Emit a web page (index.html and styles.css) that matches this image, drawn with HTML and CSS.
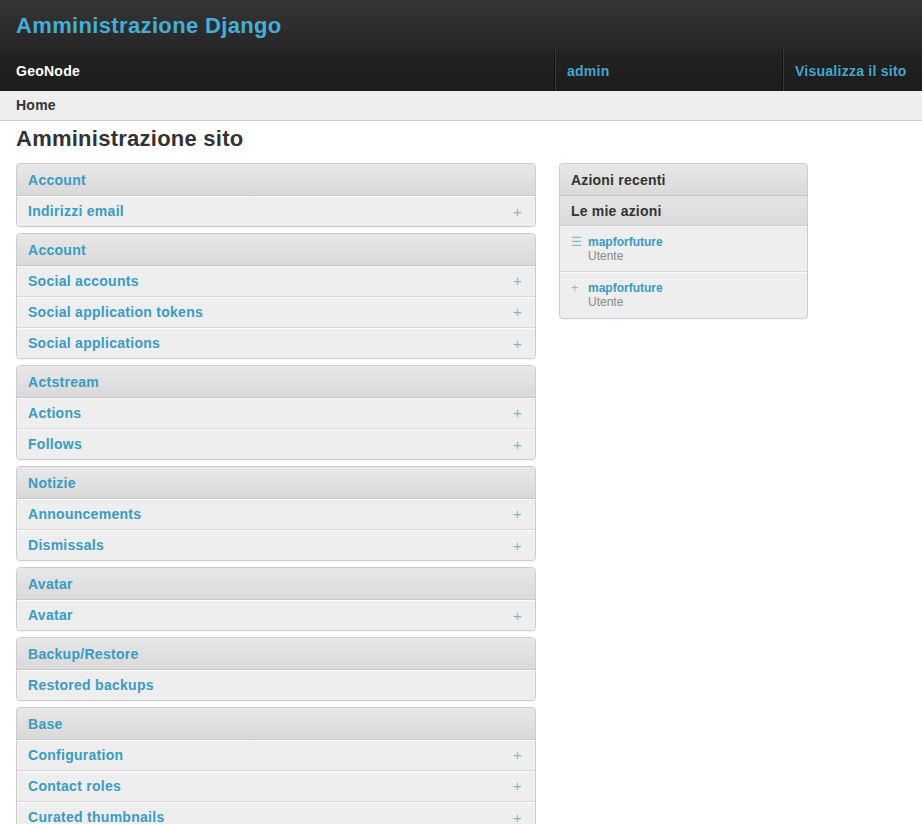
FILE: index.html
```html
<!DOCTYPE html>
<html lang="it">
<head>
<meta charset="utf-8">
<title>Amministrazione sito</title>
<link rel="stylesheet" href="styles.css">
</head>
<body>
<header class="header">
  <div class="branding"><a class="brand" href="#">Amministrazione Django</a></div>
  <nav class="topnav">
    <div class="nav-item nav-site">GeoNode</div>
    <div class="nav-item nav-user"><a href="#">admin</a></div>
    <div class="nav-item nav-view"><a href="#">Visualizza il sito</a></div>
  </nav>
</header>
<div class="breadcrumbs">Home</div>
<main class="content">
  <h1 class="page-title">Amministrazione sito</h1>
  <div class="columns">
    <div class="apps">
      <section class="module">
        <div class="mod-head"><a href="#">Account</a></div>
        <div class="mod-row"><a href="#">Indirizzi email</a><span class="add">+</span></div>
      </section>
      <section class="module">
        <div class="mod-head"><a href="#">Account</a></div>
        <div class="mod-row"><a href="#">Social accounts</a><span class="add">+</span></div>
        <div class="mod-row"><a href="#">Social application tokens</a><span class="add">+</span></div>
        <div class="mod-row"><a href="#">Social applications</a><span class="add">+</span></div>
      </section>
      <section class="module">
        <div class="mod-head"><a href="#">Actstream</a></div>
        <div class="mod-row"><a href="#">Actions</a><span class="add">+</span></div>
        <div class="mod-row"><a href="#">Follows</a><span class="add">+</span></div>
      </section>
      <section class="module">
        <div class="mod-head"><a href="#">Notizie</a></div>
        <div class="mod-row"><a href="#">Announcements</a><span class="add">+</span></div>
        <div class="mod-row"><a href="#">Dismissals</a><span class="add">+</span></div>
      </section>
      <section class="module">
        <div class="mod-head"><a href="#">Avatar</a></div>
        <div class="mod-row"><a href="#">Avatar</a><span class="add">+</span></div>
      </section>
      <section class="module">
        <div class="mod-head"><a href="#">Backup/Restore</a></div>
        <div class="mod-row"><a href="#">Restored backups</a></div>
      </section>
      <section class="module">
        <div class="mod-head"><a href="#">Base</a></div>
        <div class="mod-row"><a href="#">Configuration</a><span class="add">+</span></div>
        <div class="mod-row"><a href="#">Contact roles</a><span class="add">+</span></div>
        <div class="mod-row"><a href="#">Curated thumbnails</a><span class="add">+</span></div>
      </section>
    </div>
    <aside class="sidebar">
      <section class="module">
        <div class="mod-head dark">Azioni recenti</div>
        <div class="mod-sub">Le mie azioni</div>
        <ul class="actions">
          <li class="action"><span class="act-icon">&#9776;</span><div class="act-body"><a href="#">mapforfuture</a><span class="act-type">Utente</span></div></li>
          <li class="action"><span class="act-icon">+</span><div class="act-body"><a href="#">mapforfuture</a><span class="act-type">Utente</span></div></li>
        </ul>
      </section>
    </aside>
  </div>
</main>
</body>
</html>
```

FILE: styles.css
```css
* { box-sizing: border-box; }
html, body { margin: 0; padding: 0; }
body {
  font-family: "Liberation Sans", Arial, sans-serif;
  font-size: 14px;
  color: #333;
  background: #fff;
  height: 824px;
  overflow: hidden;
}
a { text-decoration: none; color: #3a9bc4; }

.header {
  background: linear-gradient(to bottom, #353535 0%, #262626 50px, #232323 52px, #1c1c1c 100%);
}
.branding {
  height: 50px;
  padding: 13px 16px 0;
}
.brand {
  font-size: 22px;
  font-weight: bold;
  color: #45aed6;
  line-height: 26px;
  letter-spacing: 0.35px;
}
.topnav {
  display: flex;
  height: 41px;
}
.nav-item {
  display: flex;
  align-items: center;
  font-weight: bold;
  font-size: 14px;
  padding: 0 12px;
  letter-spacing: 0.25px;
}
.nav-site {
  flex: 0 0 554px;
  padding-left: 16px;
  color: #fff;
}
.nav-user {
  flex: 0 0 228px;
  border-left: 1px solid #111;
  box-shadow: inset 1px 0 0 #3a3a3a;
  padding-left: 12px;
}
.nav-view {
  flex: 1;
  border-left: 1px solid #111;
  box-shadow: inset 1px 0 0 #3a3a3a;
}
.nav-item a { color: #45a6cc; }

.breadcrumbs {
  height: 30px;
  background: #eee;
  border-bottom: 1px solid #ccc;
  padding: 6px 16px 0;
  font-weight: bold;
  color: #333;
  letter-spacing: 0.25px;
}

.content {
  padding: 0 16px;
}
.page-title {
  margin: 4px 0 10px;
  font-size: 22px;
  line-height: 28px;
  font-weight: bold;
  color: #333;
  letter-spacing: 0.25px;
}
.columns {
  display: flex;
  align-items: flex-start;
  gap: 23px;
}
.apps {
  flex: 0 0 520px;
  display: flex;
  flex-direction: column;
  gap: 6px;
}
.sidebar {
  flex: 0 0 249px;
}
.module {
  border: 1px solid #ccc;
  border-radius: 4px;
  overflow: hidden;
  background: #eee;
  box-shadow: 0 1px 1px rgba(0,0,0,0.04);
}
.mod-head {
  height: 32px;
  padding: 0 11px;
  display: flex;
  align-items: center;
  background: linear-gradient(to bottom, #e8e8e8, #d9d9d9);
  border-bottom: 1px solid #c8c8c8;
  font-weight: bold;
  font-size: 14px;
  letter-spacing: 0.28px;
}
.mod-head a { color: #3a9bc4; }
.mod-head.dark { color: #333; letter-spacing: 0.2px; }
.mod-row {
  height: 31px;
  padding: 0 13px 2px 11px;
  display: flex;
  align-items: center;
  justify-content: space-between;
  background: #eeeeee;
  border-top: 1px solid #fbfbfb;
  border-bottom: 1px solid #d9d9d9;
  font-weight: bold;
  letter-spacing: 0.28px;
}
.mod-row:last-child { border-bottom: 0; height: 30px; padding-bottom: 1px; }
.mod-row a { color: #3a9bc4; }
.add {
  color: #8ab6cc;
  font-weight: normal;
  font-size: 15px;
}
.mod-sub {
  height: 30px;
  padding: 0 11px;
  display: flex;
  align-items: center;
  background: linear-gradient(to bottom, #e4e4e4, #dadada);
  border-bottom: 1px solid #d0d0d0;
  font-weight: bold;
  color: #333;
  letter-spacing: 0.2px;
}
.actions {
  list-style: none;
  margin: 0;
  padding: 0;
}
.action {
  display: flex;
  gap: 7px;
  padding: 8px 11px 7px;
  border-top: 1px solid #fafafa;
  border-bottom: 1px solid #d9d9d9;
  height: 46px;
  font-size: 12px;
}
.action:last-child { border-bottom: 0; }
.act-icon {
  color: #8ab6cc;
  font-size: 12px;
  width: 10px;
  line-height: 14px;
}
.act-body {
  display: flex;
  flex-direction: column;
  line-height: 14px;
}
.act-body a { font-weight: bold; color: #3a9bc4; }
.act-type { color: #888; }
```
